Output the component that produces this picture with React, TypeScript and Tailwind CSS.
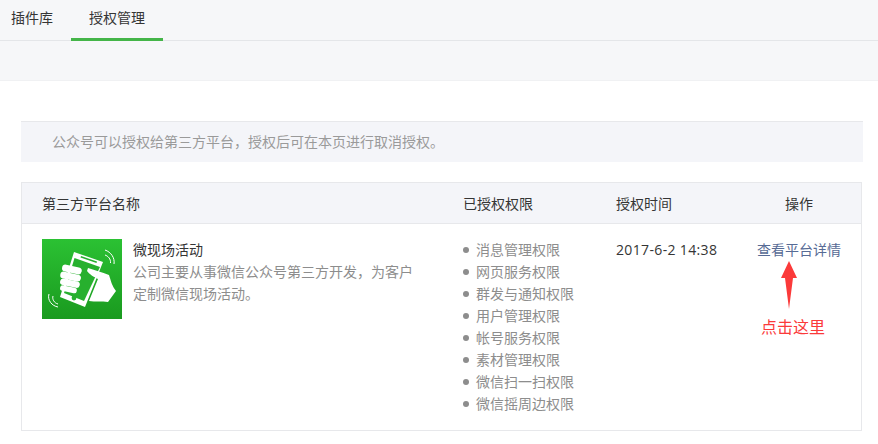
const permissions = [
  '消息管理权限',
  '网页服务权限',
  '群发与通知权限',
  '用户管理权限',
  '帐号服务权限',
  '素材管理权限',
  '微信扫一扫权限',
  '微信摇周边权限',
];

function AppLogo() {
  return (
    <svg width="80" height="80" viewBox="0 0 80 80" className="shrink-0">
      <defs>
        <linearGradient id="logoBg" x1="0" y1="0" x2="0" y2="1">
          <stop offset="0" stopColor="#2bc133" />
          <stop offset="1" stopColor="#1a9a1f" />
        </linearGradient>
      </defs>
      <rect width="80" height="80" fill="url(#logoBg)" />
      {/* phone */}
      <path d="M32 13 L61 23 L43 68 L18 58 Z" fill="#fff" />
      <path d="M32.5 19 L58 28 L42 62 L22 54 Z" fill="#27b02e" />
      <path d="M39 17 L55 22.5 L54.5 24 L38.5 18.5 Z" fill="#27b02e" />
      <circle cx="32" cy="59" r="2.4" fill="#27b02e" />
      {/* fingers */}
      <rect x="20" y="27" width="20" height="7" rx="3.5" fill="#fff" transform="rotate(12 30 30)" />
      <rect x="18" y="34" width="21" height="7" rx="3.5" fill="#fff" transform="rotate(12 28 38)" />
      <rect x="18" y="41" width="20" height="6.5" rx="3.2" fill="#fff" transform="rotate(12 28 44)" />
      <rect x="18" y="47.5" width="17" height="5.5" rx="2.7" fill="#fff" transform="rotate(12 26 50)" />
      {/* thumb and palm */}
      <path d="M46 29 C52 31 60 33 67 36 C69 42 70 47 74 52 L66 63 C60 62 53 63 47 62 L56 40 C52 38 47 35 45 32 Z" fill="#fff" />
      {/* waves */}
      <path d="M63 11 C69 13 73 19 72 25" fill="none" stroke="#fff" strokeWidth="1" />
      <path d="M63 16 C66 17 69 20 68.5 24" fill="none" stroke="#fff" strokeWidth="1" />
      <path d="M7 55 C5 61 10 67 16 68" fill="none" stroke="#fff" strokeWidth="1" />
      <path d="M11 57 C10 60 12 64 16 65" fill="none" stroke="#fff" strokeWidth="1" />
    </svg>
  );
}

function RedArrow() {
  return (
    <svg width="16" height="49" viewBox="0 0 16 49" className="mr-[20px] block">
      <path d="M8 0 L16 17 L12 17 L8 48 L4 17 L0 17 Z" fill="#fb3a3a" />
    </svg>
  );
}

export default function App() {
  return (
    <div
      className="w-[878px] h-[444px] overflow-hidden bg-white text-[14px] text-[#353535]"
      style={{ fontFamily: '"Open Sans", "Noto Sans CJK SC", sans-serif' }}
    >
      <div className="h-[81px] bg-[#f6f7f9] border-b border-[#f0f1f3]">
        <div className="flex h-[41px] border-b border-[#e4e6e9]">
          <div className="w-[71px] pl-[11px] pt-[9px] leading-[18px]">插件库</div>
          <div className="w-[92px] h-[41px] border-b-[3px] border-[#44b549] pt-[9px] text-center leading-[18px]">
            授权管理
          </div>
        </div>
      </div>

      <div className="pl-[21px] pr-[15px] pt-[40px]">
        <div className="h-[41px] bg-[#f4f5f9] border-t border-[#e7e8eb] pl-[31px] leading-[40px] text-[#9a9a9a]">
          公众号可以授权给第三方平台，授权后可在本页进行取消授权。
        </div>

        <div className="mt-[20px] h-[249px] w-[841px] border border-[#e7e8eb]">
          <div className="flex h-[41px] items-center bg-[#f4f5f9] border-b border-[#e7e8eb]">
            <div className="w-[420px] pl-[20px]">第三方平台名称</div>
            <div className="w-[153px] pl-[21px]">已授权权限</div>
            <div className="w-[142px] pl-[21px]">授权时间</div>
            <div className="flex-1 text-center">操作</div>
          </div>
          <div className="flex pt-[15px]">
            <div className="flex w-[420px] pl-[20px]">
              <AppLogo />
              <div className="ml-[11px] w-[290px]">
                <div className="leading-[22px]">微现场活动</div>
                <p className="leading-[22px] text-[#8d8d8d]">
                  公司主要从事微信公众号第三方开发，为客户
                  <br />
                  定制微信现场活动。
                </p>
              </div>
            </div>
            <ul className="w-[153px] pl-[21px]">
              {permissions.map((name) => (
                <li key={name} className="flex h-[22px] items-center leading-[22px] text-[#8d8d8d]">
                  <span className="mr-[7px] h-[6px] w-[6px] rounded-full bg-[#8d8d8d]" />
                  {name}
                </li>
              ))}
            </ul>
            <div className="w-[142px] pl-[21px] leading-[22px] tracking-[0.35px]">2017-6-2 14:38</div>
            <div className="flex flex-1 flex-col items-center">
              <a className="leading-[22px] text-[#576b95]">查看平台详情</a>
              <RedArrow />
              <div className="mr-[12px] mt-[7px] text-[16px] leading-[20px] text-[#fb3a3a]">点击这里</div>
            </div>
          </div>
        </div>
      </div>
    </div>
  );
}
